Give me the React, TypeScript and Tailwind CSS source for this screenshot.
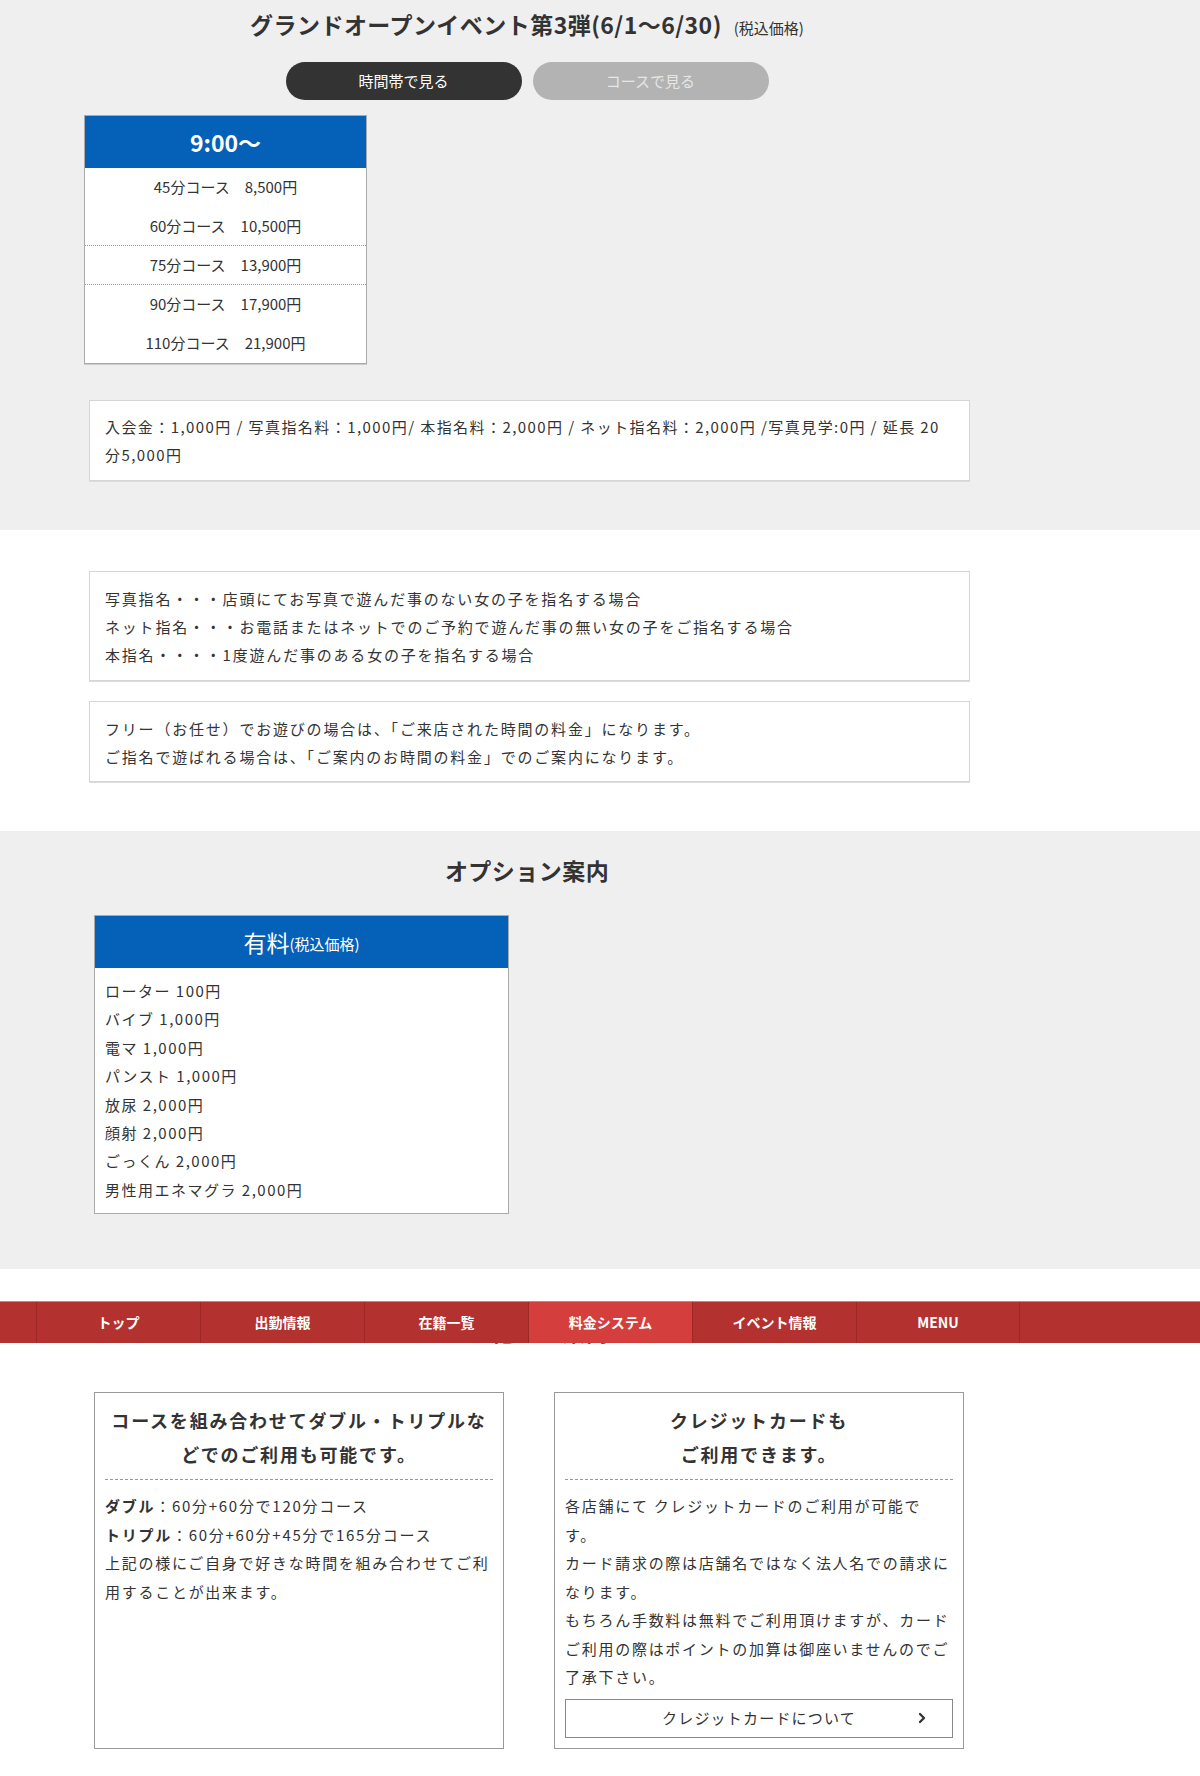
import { ChevronRight } from "lucide-react";

const font = "font-['Noto_Sans_CJK_JP','Noto_Sans',sans-serif]";

// rows of the time-band table; `line` puts a dotted rule under the row
const courses = [
  { name: "45分コース", price: "8,500円", line: false },
  { name: "60分コース", price: "10,500円", line: true },
  { name: "75分コース", price: "13,900円", line: true },
  { name: "90分コース", price: "17,900円", line: false },
  { name: "110分コース", price: "21,900円", line: false },
];

const options = [
  "ローター 100円",
  "バイブ 1,000円",
  "電マ 1,000円",
  "パンスト 1,000円",
  "放尿 2,000円",
  "顔射 2,000円",
  "ごっくん 2,000円",
  "男性用エネマグラ 2,000円",
];

const navItems = ["トップ", "出勤情報", "在籍一覧", "料金システム", "イベント情報", "MENU"];

export default function App() {
  return (
    <div className={`${font} min-h-[1776px] bg-white text-[#333]`}>
      {/* pricing */}
      <section className="bg-[#efefef] pt-[7px] pb-[49px]">
        <div className="ml-[84px] w-[886px]">
          <h2 className="h-[34px] text-center text-[23px] font-bold leading-[34px] tracking-[0.02em]">
            グランドオープンイベント第3弾(6/1〜6/30)
            <span className="ml-[12px] align-baseline text-[15px] leading-none font-normal tracking-normal">(税込価格)</span>
          </h2>

          <div className="mt-[21px] flex justify-center gap-[11px]">
            <button className="h-[38px] w-[236px] rounded-full bg-[#333] text-[15px] text-white">時間帯で見る</button>
            <button className="h-[38px] w-[236px] rounded-full bg-[#b3b3b3] text-[15px] text-[#e6e6e6]">コースで見る</button>
          </div>

          <div className="mt-[15px] w-[283px] border border-[#aaa] bg-white shadow-[0_1px_0_#ccc]">
            <div className="flex h-[52px] items-center justify-center bg-[#0560b7] text-[23px] font-bold text-white">
              9:00〜
            </div>
            {courses.map((c) => (
              <div
                key={c.name}
                className={`flex h-[39px] items-center justify-center text-[15px] ${c.line ? "border-b border-dotted border-[#999]" : ""}`}
              >
                {c.name}　{c.price}
              </div>
            ))}
          </div>

          <div className="mt-[36px] ml-[5px] w-[881px] border border-[#d5d5d5] bg-white px-[15px] pt-[12px] pb-[11px] text-[15px] leading-[28px] tracking-[0.095em] shadow-[0_1px_0_#ddd]">
            入会金：1,000円 / 写真指名料：1,000円/ 本指名料：2,000円 / ネット指名料：2,000円 /写真見学:0円 / 延長 20分5,000円
          </div>
        </div>
      </section>

      {/* notes */}
      <section className="bg-white pt-[41px] pb-[49px]">
        <div className="ml-[89px] flex w-[881px] flex-col gap-[20px] text-[15px] leading-[28px] tracking-[0.12em]">
          <div className="border border-[#d5d5d5] px-[15px] pt-[13px] pb-[11px] shadow-[0_1px_0_#ddd]">
            <p>写真指名・・・店頭にてお写真で遊んだ事のない女の子を指名する場合</p>
            <p>ネット指名・・・お電話またはネットでのご予約で遊んだ事の無い女の子をご指名する場合</p>
            <p>本指名・・・・1度遊んだ事のある女の子を指名する場合</p>
          </div>
          <div className="border border-[#d5d5d5] px-[15px] pt-[13px] pb-[10px] shadow-[0_1px_0_#ddd]">
            <p>フリー（お任せ）でお遊びの場合は、「ご来店された時間の料金」になります。</p>
            <p>ご指名で遊ばれる場合は、「ご案内のお時間の料金」でのご案内になります。</p>
          </div>
        </div>
      </section>

      {/* options */}
      <section className="bg-[#efefef] pt-[23px] pb-[55px]">
        <div className="ml-[84px] w-[886px]">
          <h2 className="text-center text-[23px] font-bold leading-[32px] tracking-[0.02em]">オプション案内</h2>
          <div className="mt-[29px] ml-[10px] w-[415px] border border-[#aaa] bg-white">
            <div className="flex h-[52px] items-center justify-center bg-[#0560b7] text-white">
              <span className="text-[23px]">有料</span>
              <span className="mt-[5px] text-[15px]">(税込価格)</span>
            </div>
            <ul className="px-[10px] pt-[9px] pb-[9px] text-[15px] leading-[28.4px] tracking-[0.1em]">
              {options.map((o) => (
                <li key={o}>{o}</li>
              ))}
            </ul>
          </div>
        </div>
      </section>

      {/* other info, partly under the fixed nav */}
      <section className="relative bg-white pt-[46px] pb-[26px]">
        <h2 className="ml-[84px] w-[886px] text-center text-[23px] font-bold leading-[32px] tracking-[0.02em]">
          その他のご案内
        </h2>

        <nav className="absolute top-[32px] left-0 flex h-[42px] w-full border-t border-[#e07a76] bg-[#b3322f] pl-[36px]">
          {navItems.map((n, i) => (
            <a
              key={n}
              className={`flex w-[164px] items-center justify-center border-l border-[#9c2724] text-[14px] font-bold text-white ${i === 5 ? "border-r" : ""} ${n === "料金システム" ? "bg-[#d43f3e]" : ""}`}
            >
              {n}
            </a>
          ))}
        </nav>

        <div className="mt-[45px] ml-[94px] grid w-[870px] grid-cols-2 gap-[50px]">
          <div className="border border-[#999] px-[10px] pt-[10px] pb-[11px]">
            <h3 className="text-center text-[18px] font-bold leading-[34px] tracking-[0.1em]">
              コースを組み合わせてダブル・トリプルなどでのご利用も可能です。
            </h3>
            <div className="mt-[8px] border-t border-dashed border-[#999]" />
            <div className="mt-[12px] text-[15px] leading-[28.5px] tracking-[0.115em]">
              <p>
                <b>ダブル</b>：60分+60分で120分コース
              </p>
              <p>
                <b>トリプル</b>：60分+60分+45分で165分コース
              </p>
              <p>上記の様にご自身で好きな時間を組み合わせてご利用することが出来ます。</p>
            </div>
          </div>

          <div className="border border-[#999] px-[10px] pt-[10px] pb-[10px]">
            <h3 className="text-center text-[18px] font-bold leading-[34px] tracking-[0.1em]">
              クレジットカードも
              <br />
              ご利用できます。
            </h3>
            <div className="mt-[8px] border-t border-dashed border-[#999]" />
            <div className="mt-[12px] text-[15px] leading-[28.5px] tracking-[0.115em]">
              <p>各店舗にて クレジットカードのご利用が可能です。</p>
              <p>カード請求の際は店舗名ではなく法人名での請求になります。</p>
              <p>もちろん手数料は無料でご利用頂けますが、カードご利用の際はポイントの加算は御座いませんのでご了承下さい。</p>
            </div>
            <a className="relative mt-[7px] flex h-[39px] items-center justify-center border border-[#888] text-[15px] tracking-[0.08em]">
              クレジットカードについて
              <ChevronRight className="absolute right-[22px]" size={16} strokeWidth={3.5} />
            </a>
          </div>
        </div>
      </section>
    </div>
  );
}
